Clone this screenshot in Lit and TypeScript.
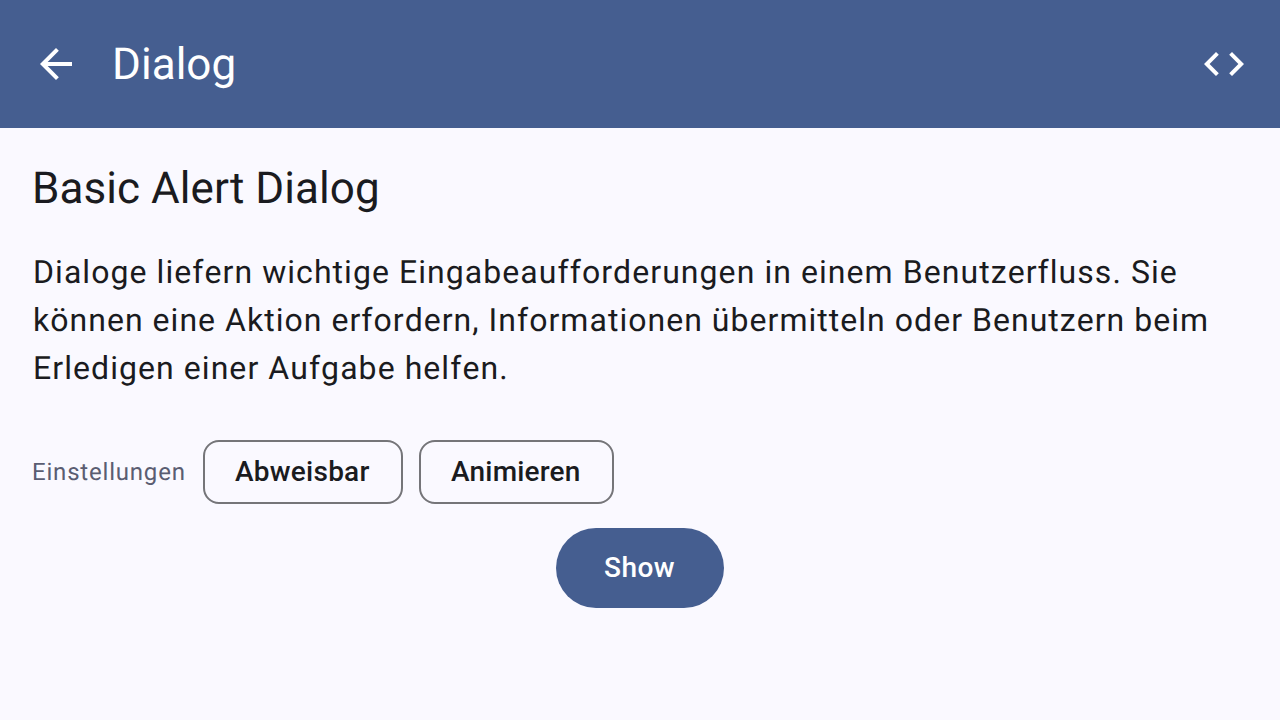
import { LitElement, html, css } from "lit";
import { customElement } from "lit/decorators.js";

@customElement("app-root")
export class AppRoot extends LitElement {
  static styles = css`
    :host { display: flex; flex-direction: column; height: 100vh; overflow: hidden; box-sizing: border-box; background: #faf9ff; color: #1a1b20; font-family: Roboto, sans-serif; text-rendering: geometricPrecision; -webkit-font-smoothing: antialiased; }
    * { box-sizing: border-box; margin: 0; }
    button { font: inherit; color: inherit; border: 0; background: none; padding: 0; }
    .bar { height: 128px; flex: none; background: #455e90; color: #fff; display: flex; align-items: center; padding: 0 32px; }
    .icon { width: 48px; height: 48px; display: block; }
    .icon svg { width: 48px; height: 48px; display: block; fill: currentColor; }
    .title { flex: 1; font-size: 44px; line-height: 56px; font-weight: 400; letter-spacing: 0.04px; padding-left: 32px; white-space: nowrap; }
    .main { padding: 32px 32px 0; display: flex; flex-direction: column; }
    .heading { font-size: 44px; line-height: 56px; font-weight: 400; letter-spacing: 0.05px; white-space: nowrap; }
    .text { font-size: 32px; line-height: 48px; letter-spacing: 1.06px; font-kerning: none; padding: 32px 0 0 1px; white-space: nowrap; }
    .tight { letter-spacing: 1.03px; }
    .settings { display: flex; align-items: center; padding-top: 48px; }
    .label { font-size: 24px; line-height: 32px; letter-spacing: 0.8px; color: #5a5d72; width: 171px; white-space: nowrap; }
    .chip { height: 64px; border: 2px solid #757579; border-radius: 16px; font-size: 28px; line-height: 40px; font-weight: 500; letter-spacing: 0.25px; margin-right: 16px; padding: 0 30px; text-align: left; width: 200px; white-space: nowrap; }
    .chip.narrow { width: 195px; letter-spacing: 0.2px; }
    .show { align-self: center; margin-top: 24px; width: 168px; height: 80px; border-radius: 40px; background: #455e90; color: #fff; font-size: 28px; line-height: 40px; font-weight: 500; letter-spacing: 0.4px; padding-right: 1px; }
  `;

  render() {
    return html`
      <header class="bar">
        <button class="icon" aria-label="Back"><svg viewBox="0 0 24 24"><path d="M20 11H7.83l5.59-5.59L12 4l-8 8 8 8 1.41-1.41L7.83 13H20v-2z"/></svg></button>
        <h1 class="title">Dialog</h1>
        <button class="icon" aria-label="Code"><svg viewBox="0 0 24 24"><path d="M9.4 16.6 4.8 12l4.6-4.6L8 6l-6 6 6 6 1.4-1.4zm5.2 0 4.6-4.6-4.6-4.6L16 6l6 6-6 6-1.4-1.4z"/></svg></button>
      </header>
      <main class="main">
        <h2 class="heading">Basic Alert Dialog</h2>
        <p class="text">Dialoge liefern wichtige Eingabeaufforderungen in einem Benutzerfluss. Sie<br><span class="tight">können eine Aktion erfordern, Informationen übermitteln oder Benutzern beim</span><br>Erledigen einer Aufgabe helfen.</p>
        <div class="settings">
          <span class="label">Einstellungen</span>
          <button class="chip">Abweisbar</button>
          <button class="chip narrow">Animieren</button>
        </div>
        <button class="show">Show</button>
      </main>
    `;
  }
}
